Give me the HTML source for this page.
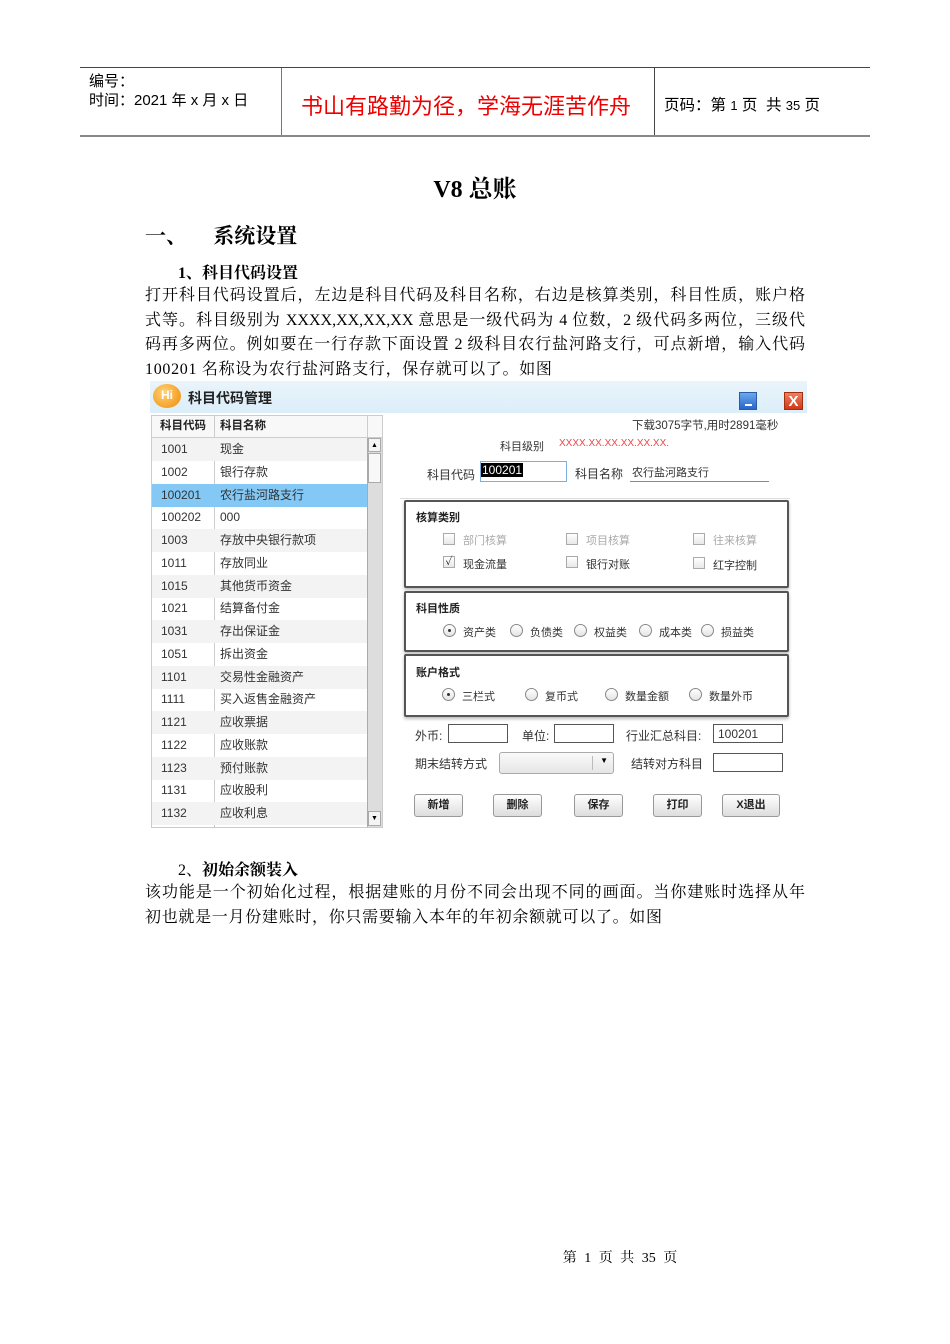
<!DOCTYPE html>
<html><head><meta charset="utf-8"><style>
*{margin:0;padding:0;box-sizing:border-box}
body{width:950px;height:1344px;background:#fff;position:relative;overflow:hidden;font-family:"Liberation Serif","Noto Serif CJK SC",serif;color:#000}
.a{position:absolute;white-space:nowrap}
.s{font-family:"Liberation Sans","Noto Sans CJK SC",sans-serif}
.p{font-size:16px;line-height:24.5px}
.j{display:block;width:660px;text-align:justify;text-align-last:justify;height:24.5px;white-space:nowrap}
.ui{font-family:"Liberation Sans","Noto Sans CJK SC",sans-serif;font-size:11px;color:#333}
.row{position:absolute;left:152px;width:215px;height:23px;font-size:12px;color:#333}
.row span{position:absolute;top:0;line-height:23px}
.box{position:absolute;left:404px;width:385px;border:2px solid #555;border-radius:2px;background:#fff;box-shadow:0 2px 3px #bbb}
.cb{position:absolute;width:12px;height:12px;border:1px solid #aaa;background:linear-gradient(#fff,#e8e8e8)}
.rd{position:absolute;width:13px;height:13px;border:1px solid #888;border-radius:50%;background:linear-gradient(#fff,#e4e4e4)}
.btn{position:absolute;top:794px;width:49px;height:23px;border:1px solid #999;border-radius:3px;background:linear-gradient(#fff,#ddd);font-size:11px;font-weight:bold;text-align:center;line-height:21px;color:#222;font-family:"Liberation Sans","Noto Sans CJK SC",sans-serif}
.inp{position:absolute;height:19px;border:1px solid #555;background:#fff}
</style></head><body>
<div class="a" style="left:80px;top:67px;width:790px;height:1px;background:#444"></div>
<div class="a" style="left:80px;top:135px;width:790px;height:2px;background:#888"></div>
<div class="a" style="left:281px;top:68px;width:1px;height:67px;background:#777"></div>
<div class="a" style="left:654px;top:68px;width:1px;height:67px;background:#444"></div>
<div class="a s" style="left:89px;top:70px;font-size:15px">编号：</div>
<div class="a s" style="left:89px;top:89px;font-size:15px">时间：2021 年 x 月 x 日</div>
<div class="a s" style="left:301px;top:89px;font-size:22px;color:#e00">书山有路勤为径，学海无涯苦作舟</div>
<div class="a s" style="left:664px;top:93px;font-size:15.5px">页码：第 <span style="font-size:13px">1</span> 页&nbsp; 共 <span style="font-size:13px">35</span> 页</div>
<div class="a" style="left:0;width:950px;text-align:center;top:169px;font-size:24px;font-weight:bold">V8 总账</div>
<div class="a" style="left:145px;top:220px;font-size:21px;font-weight:bold">一、&nbsp;&nbsp;&nbsp;&nbsp;&nbsp;系统设置</div>
<div class="a" style="left:178px;top:260px;font-size:16px;font-weight:bold">1、科目代码设置</div>
<div class="a p" style="left:145px;top:284px">
<span class="j">打开科目代码设置后，左边是科目代码及科目名称，右边是核算类别，科目性质，账户格</span>
<span class="j">式等。科目级别为 XXXX,XX,XX,XX 意思是一级代码为 4 位数，2 级代码多两位，三级代</span>
<span class="j">码再多两位。例如要在一行存款下面设置 2 级科目农行盐河路支行，可点新增，输入代码</span>
<span style="display:block;letter-spacing:0.7px">100201 名称设为农行盐河路支行，保存就可以了。如图</span></div>
<div class="a" style="left:150px;top:381px;width:657px;height:447px;background:#fff"></div>
<div class="a" style="left:150px;top:381px;width:657px;height:32px;background:linear-gradient(#eaf4fb,#dbeef9)"></div>
<div class="a" style="left:153px;top:384px;width:28px;height:24px;border-radius:50%;background:radial-gradient(circle at 40% 35%,#ffd27a,#f08a00);color:#fff;font:bold 12px 'Liberation Sans';text-align:center;line-height:22px">Hi</div>
<div class="a ui" style="left:188px;top:388px;font-size:14px;font-weight:bold;color:#222">科目代码管理</div>
<div class="a" style="left:739px;top:392px;width:18px;height:18px;background:linear-gradient(#6aa8ee,#2a66c8);border:1px solid #2a5aa8"><div style="position:absolute;left:5px;top:11px;width:7px;height:2px;background:#fff"></div></div>
<div class="a" style="left:784px;top:392px;width:19px;height:18px;background:linear-gradient(#f08060,#d03818);border:1px solid #a03010;color:#fff;font:bold 15px 'Liberation Sans';text-align:center;line-height:17px">X</div>
<div class="a" style="left:151px;top:415px;width:232px;height:413px;border:1px solid #ccc;background:#fff"></div>
<div class="a" style="left:152px;top:416px;width:230px;height:22px;background:#f8f8f8;border-bottom:1px solid #ccc"></div>
<div class="a ui" style="left:160px;top:416px;line-height:21px;font-weight:bold;font-size:11.5px;color:#222">科目代码</div>
<div class="a ui" style="left:220px;top:416px;line-height:21px;font-weight:bold;font-size:11.5px;color:#222">科目名称</div>
<div class="a" style="left:214px;top:416px;width:1px;height:411px;background:#ccc"></div>
<div class="a" style="left:367px;top:416px;width:1px;height:22px;background:#ccc"></div>
<div class="row s" style="top:438px;background:#f3f3f3"><span style="left:9px">1001</span><span style="left:68px">现金</span></div>
<div class="row s" style="top:461px"><span style="left:9px">1002</span><span style="left:68px">银行存款</span></div>
<div class="row s" style="top:484px;background:#84c9f6"><span style="left:9px">100201</span><span style="left:68px">农行盐河路支行</span></div>
<div class="row s" style="top:506px"><span style="left:9px">100202</span><span style="left:68px">000</span></div>
<div class="row s" style="top:529px;background:#f3f3f3"><span style="left:9px">1003</span><span style="left:68px">存放中央银行款项</span></div>
<div class="row s" style="top:552px"><span style="left:9px">1011</span><span style="left:68px">存放同业</span></div>
<div class="row s" style="top:575px;background:#f3f3f3"><span style="left:9px">1015</span><span style="left:68px">其他货币资金</span></div>
<div class="row s" style="top:597px"><span style="left:9px">1021</span><span style="left:68px">结算备付金</span></div>
<div class="row s" style="top:620px;background:#f3f3f3"><span style="left:9px">1031</span><span style="left:68px">存出保证金</span></div>
<div class="row s" style="top:643px"><span style="left:9px">1051</span><span style="left:68px">拆出资金</span></div>
<div class="row s" style="top:666px;background:#f3f3f3"><span style="left:9px">1101</span><span style="left:68px">交易性金融资产</span></div>
<div class="row s" style="top:688px"><span style="left:9px">1111</span><span style="left:68px">买入返售金融资产</span></div>
<div class="row s" style="top:711px;background:#f3f3f3"><span style="left:9px">1121</span><span style="left:68px">应收票据</span></div>
<div class="row s" style="top:734px"><span style="left:9px">1122</span><span style="left:68px">应收账款</span></div>
<div class="row s" style="top:757px;background:#f3f3f3"><span style="left:9px">1123</span><span style="left:68px">预付账款</span></div>
<div class="row s" style="top:779px"><span style="left:9px">1131</span><span style="left:68px">应收股利</span></div>
<div class="row s" style="top:802px;background:#f3f3f3"><span style="left:9px">1132</span><span style="left:68px">应收利息</span></div>
<div class="a" style="left:367px;top:438px;width:15px;height:389px;background:#ddd;border-left:1px solid #aaa"></div>
<div class="a" style="left:368px;top:438px;width:13px;height:14px;background:#f4f4f4;border:1px solid #aaa;font-size:7px;text-align:center;line-height:12px">▲</div>
<div class="a" style="left:368px;top:453px;width:13px;height:30px;background:#f8f8f8;border:1px solid #aaa"></div>
<div class="a" style="left:368px;top:811px;width:13px;height:15px;background:#f4f4f4;border:1px solid #aaa;font-size:7px;text-align:center;line-height:13px">▼</div>
<div class="a ui" style="left:632px;top:417px;font-size:11.5px">下载3075字节,用时2891毫秒</div>
<div class="a ui" style="left:500px;top:438px">科目级别</div>
<div class="a ui" style="left:559px;top:438px;color:#e44;font-size:10px">XXXX.XX.XX.XX.XX.XX.</div>
<div class="a ui" style="left:427px;top:466px;font-size:12px">科目代码</div>
<div class="a" style="left:480px;top:461px;width:87px;height:21px;border:1px solid #7ab0e0;background:#fff"></div>
<div class="a ui" style="left:481px;top:463px;background:#000;color:#fff;font-size:12px;padding:0 1px">100201</div>
<div class="a ui" style="left:575px;top:465px;font-size:12px">科目名称</div>
<div class="a ui" style="left:632px;top:464px">农行盐河路支行</div>
<div class="a" style="left:630px;top:481px;width:139px;height:1px;background:#d66"></div>
<div class="a" style="left:400px;top:498px;width:390px;height:1px;background:#ddd"></div>
<div class="box" style="top:500px;height:88px"></div>
<div class="a ui" style="left:416px;top:509px;font-weight:bold;color:#222">核算类别</div>
<div class="cb" style="left:443px;top:533px"></div><div class="a ui" style="left:463px;top:532px;color:#aaa">部门核算</div>
<div class="cb" style="left:566px;top:533px"></div><div class="a ui" style="left:586px;top:532px;color:#aaa">项目核算</div>
<div class="cb" style="left:693px;top:533px"></div><div class="a ui" style="left:713px;top:532px;color:#aaa">往来核算</div>
<div class="cb" style="left:443px;top:556px;font-size:11px;line-height:10px;text-align:center">✓</div><div class="a ui" style="left:463px;top:556px">现金流量</div>
<div class="cb" style="left:566px;top:556px"></div><div class="a ui" style="left:586px;top:556px">银行对账</div>
<div class="cb" style="left:693px;top:557px"></div><div class="a ui" style="left:713px;top:557px">红字控制</div>
<div class="box" style="top:591px;height:61px"></div>
<div class="a ui" style="left:416px;top:600px;font-weight:bold;color:#222">科目性质</div>
<div class="rd" style="left:443px;top:624px"><div style="position:absolute;left:4px;top:4px;width:3px;height:3px;border-radius:50%;background:#333"></div></div><div class="a ui" style="left:463px;top:624px">资产类</div>
<div class="rd" style="left:510px;top:624px"></div><div class="a ui" style="left:530px;top:624px">负债类</div>
<div class="rd" style="left:574px;top:624px"></div><div class="a ui" style="left:594px;top:624px">权益类</div>
<div class="rd" style="left:639px;top:624px"></div><div class="a ui" style="left:659px;top:624px">成本类</div>
<div class="rd" style="left:701px;top:624px"></div><div class="a ui" style="left:721px;top:624px">损益类</div>
<div class="box" style="top:654px;height:63px"></div>
<div class="a ui" style="left:416px;top:664px;font-weight:bold;color:#222">账户格式</div>
<div class="rd" style="left:442px;top:688px"><div style="position:absolute;left:4px;top:4px;width:3px;height:3px;border-radius:50%;background:#333"></div></div><div class="a ui" style="left:462px;top:688px">三栏式</div>
<div class="rd" style="left:525px;top:688px"></div><div class="a ui" style="left:545px;top:688px">复币式</div>
<div class="rd" style="left:605px;top:688px"></div><div class="a ui" style="left:625px;top:688px">数量金额</div>
<div class="rd" style="left:689px;top:688px"></div><div class="a ui" style="left:709px;top:688px">数量外币</div>
<div class="a ui" style="left:415px;top:727px;font-size:12px">外币:</div><div class="inp" style="left:448px;top:724px;width:60px"></div>
<div class="a ui" style="left:522px;top:727px;font-size:12px">单位:</div><div class="inp" style="left:554px;top:724px;width:60px"></div>
<div class="a ui" style="left:626px;top:727px;font-size:12px">行业汇总科目:</div><div class="inp ui" style="left:713px;top:724px;width:70px;padding-left:4px;line-height:18px;font-size:12px">100201</div>
<div class="a ui" style="left:415px;top:755px;font-size:12px">期末结转方式</div>
<div class="a" style="left:499px;top:752px;width:115px;height:22px;border:1px solid #aaa;border-radius:3px;background:linear-gradient(#fafafa,#e6e6e6)"><div style="position:absolute;right:20px;top:3px;width:1px;height:14px;background:#bbb"></div><div style="position:absolute;right:5px;top:3px;font-size:8px">▼</div></div>
<div class="a ui" style="left:631px;top:755px;font-size:12px">结转对方科目</div><div class="inp" style="left:713px;top:753px;width:70px"></div>
<div class="btn" style="left:414px">新增</div>
<div class="btn" style="left:493px">删除</div>
<div class="btn" style="left:574px">保存</div>
<div class="btn" style="left:653px">打印</div>
<div class="btn" style="left:722px;width:58px">X退出</div>
<div class="a" style="left:178px;top:857px;font-size:16px">2、<b>初始余额装入</b></div>
<div class="a p" style="left:145px;top:881px">
<span class="j">该功能是一个初始化过程，根据建账的月份不同会出现不同的画面。当你建账时选择从年</span>
<span style="display:block;letter-spacing:0.7px">初也就是一月份建账时，你只需要输入本年的年初余额就可以了。如图</span></div>
<div class="a" style="left:0;width:1240px;text-align:center;top:1247px;font-size:14px;word-spacing:4px">第 1 页 共 35 页</div>
</body></html>
